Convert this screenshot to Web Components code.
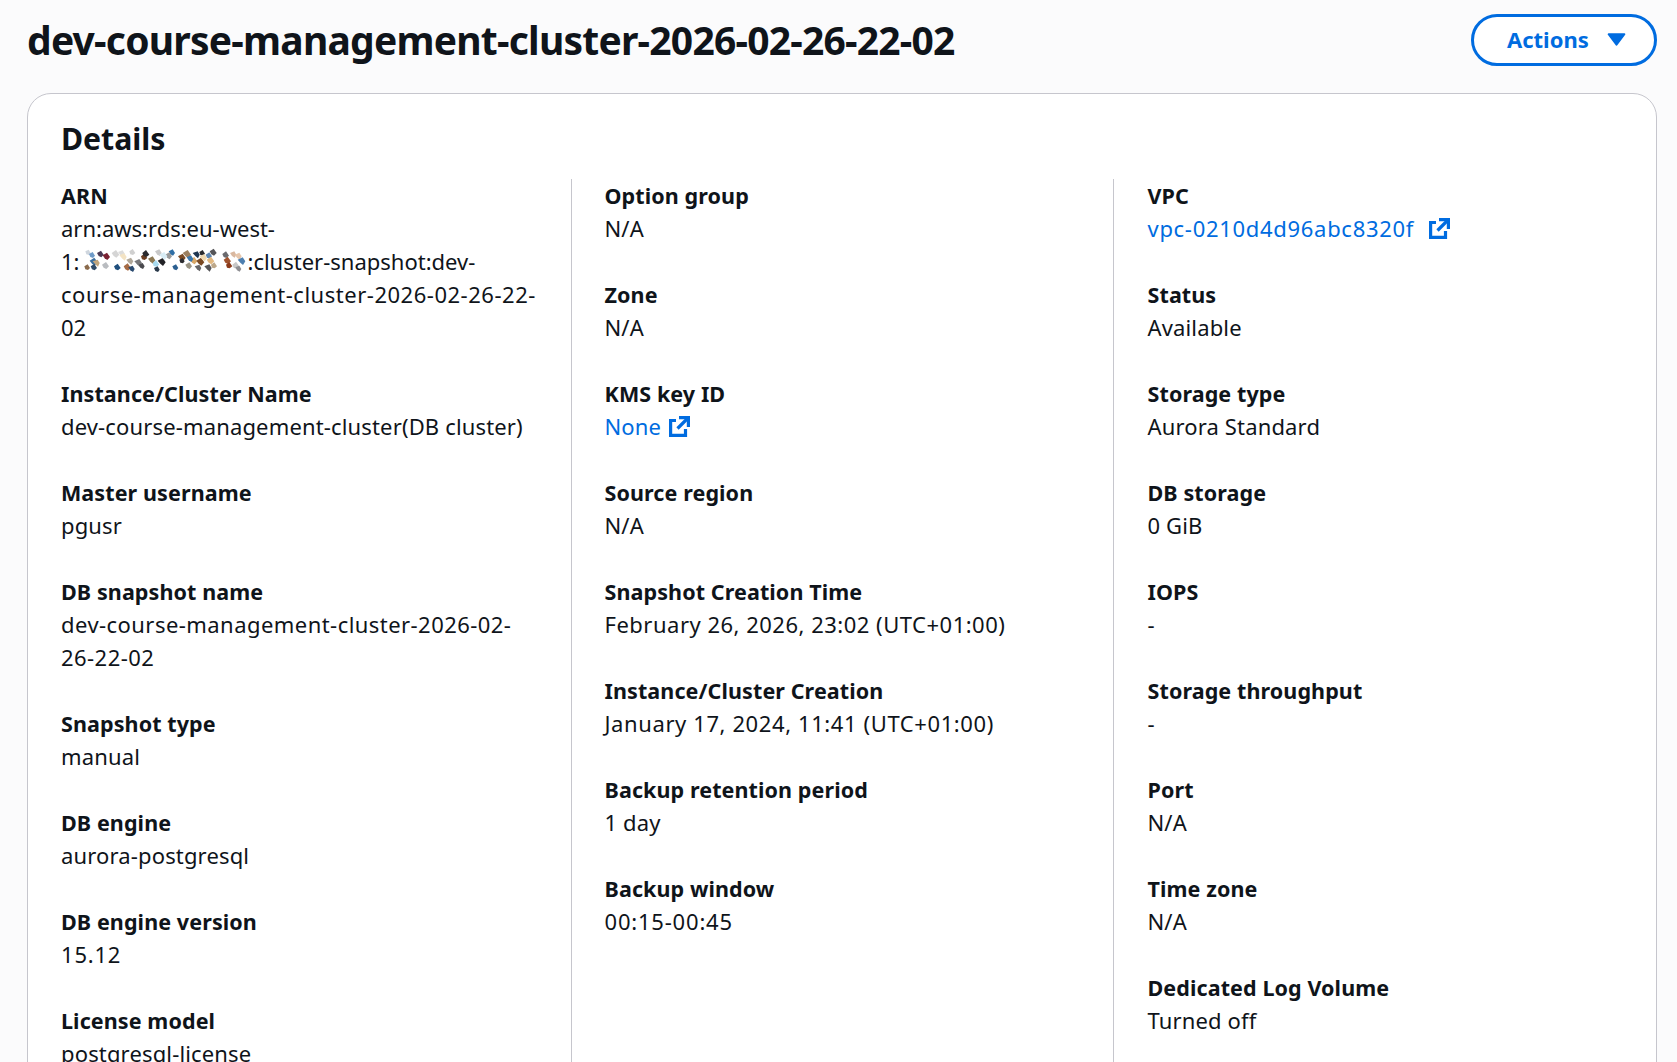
<!DOCTYPE html>
<html>
<head>
<meta charset="utf-8">
<title>dev-course-management-cluster-2026-02-26-22-02</title>
<style>
html, body { margin: 0; height: 100%; overflow: hidden; background: #fbfbfc; }
body { font-family: "Noto Sans", "Open Sans", sans-serif; color: #0f141a; }
</style>
</head>
<body>
<snapshot-page>
    <page-header>dev-course-management-cluster-2026-02-26-22-02</page-header>
    <details-card heading="Details">
        <detail-column>
            <detail-item label="ARN"><arn-value></arn-value></detail-item>
            <detail-item label="Instance/Cluster Name">dev-course-management-cluster(DB cluster)</detail-item>
            <detail-item label="Master username">pgusr</detail-item>
            <detail-item label="DB snapshot name"><span style="letter-spacing:.45px">dev-course-management-cluster-2026-02-26-22-02</span></detail-item>
            <detail-item label="Snapshot type">manual</detail-item>
            <detail-item label="DB engine">aurora-postgresql</detail-item>
            <detail-item label="DB engine version"><span style="letter-spacing:.8px">15.12</span></detail-item>
            <detail-item label="License model">postgresql-license</detail-item>
        </detail-column>
        <detail-column>
            <detail-item label="Option group">N/A</detail-item>
            <detail-item label="Zone">N/A</detail-item>
            <detail-item label="KMS key ID"><external-link style="--link-gap:8px">None</external-link></detail-item>
            <detail-item label="Source region">N/A</detail-item>
            <detail-item label="Snapshot Creation Time"><span style="letter-spacing:.5px">February 26, 2026, 23:02 (UTC+01:00)</span></detail-item>
            <detail-item label="Instance/Cluster Creation"><span style="letter-spacing:.6px">January 17, 2024, 11:41 (UTC+01:00)</span></detail-item>
            <detail-item label="Backup retention period">1 day</detail-item>
            <detail-item label="Backup window"><span style="letter-spacing:.8px">00:15-00:45</span></detail-item>
        </detail-column>
        <detail-column>
            <detail-item label="VPC"><external-link style="--link-gap:15px"><span style="letter-spacing:.7px">vpc-0210d4d96abc8320f</span></external-link></detail-item>
            <detail-item label="Status">Available</detail-item>
            <detail-item label="Storage type">Aurora Standard</detail-item>
            <detail-item label="DB storage">0 GiB</detail-item>
            <detail-item label="IOPS">-</detail-item>
            <detail-item label="Storage throughput">-</detail-item>
            <detail-item label="Port">N/A</detail-item>
            <detail-item label="Time zone">N/A</detail-item>
            <detail-item label="Dedicated Log Volume">Turned off</detail-item>
        </detail-column>
    </details-card>
</snapshot-page>

<script>
class snapshotPage extends HTMLElement {
    constructor () {
        super();
        this.attachShadow({mode: "open"}).innerHTML = `<style>
:host { display: block; padding: 14px 20px 0 27px; }
</style><slot></slot>`;
    }
}

class pageHeader extends HTMLElement {
    constructor () {
        super();
        this.attachShadow({mode: "open"}).innerHTML = `<style>
:host { display: flex; justify-content: space-between; align-items: flex-start; margin-bottom: 27px; }
h1 { margin: 0; font-size: 39px; line-height: 51px; font-weight: 700; letter-spacing: -0.77px; }
button {
    display: flex; align-items: center; gap: 17px;
    box-sizing: border-box; width: 186px; height: 52px; padding: 0 0 2px 33px;
    background: #fff; color: #006ce0; border: 3px solid #006ce0; border-radius: 26px;
    font: 700 22px "Noto Sans", sans-serif;
}
svg { width: 21px; height: 21px; }
</style>
<h1><slot></slot></h1>
<button>Actions<svg viewBox="0 0 16 16"><path fill="#006ce0" stroke="#006ce0" stroke-width="1.5" stroke-linejoin="round" d="M2 4h12l-6 8z"/></svg></button>`;
    }
}

class detailsCard extends HTMLElement {
    constructor () {
        super();
        this.attachShadow({mode: "open"}).innerHTML = `<style>
:host { display: block; box-sizing: border-box; background: #fff; border: 1.5px solid #c6c6cd; border-radius: 24px; padding: 24px 33px 33px; height: 1200px; }
h2 { margin: 0 0 19px; font-size: 30.2px; line-height: 42px; font-weight: 700; }
.cols { display: grid; grid-template-columns: 510px 542px 1fr; }
</style>
<h2></h2>
<div class="cols"><slot></slot></div>`;
        this.shadowRoot.querySelector("h2").textContent = this.getAttribute("heading");
    }
}

class detailColumn extends HTMLElement {
    constructor () {
        super();
        this.attachShadow({mode: "open"}).innerHTML = `<style>
:host { display: flex; flex-direction: column; gap: 33px; box-sizing: border-box; padding: 0 33px 0 33.5px; border-left: 1.5px solid #c6c6cd; min-height: 1000px; }
:host(:first-child) { padding-left: 0; border-left: none; }
:host(:nth-child(2)) { padding-left: 32.5px; }
</style><slot></slot>`;
    }
}

class detailItem extends HTMLElement {
    constructor () {
        super();
        this.attachShadow({mode: "open"}).innerHTML = `<style>
:host { display: block; font-size: 22px; line-height: 33px; letter-spacing: .15px; }
.label { font-weight: 700; font-size: 21.5px; letter-spacing: .1px; }
</style>
<div class="label"></div>
<div><slot></slot></div>`;
        this.shadowRoot.querySelector(".label").textContent = this.getAttribute("label");
    }
}

class externalLink extends HTMLElement {
    constructor () {
        super();
        this.attachShadow({mode: "open"}).innerHTML = `<style>
:host { display: inline-flex; align-items: center; gap: var(--link-gap, 14px); color: #006ce0; }
svg { width: 21px; height: 21px; }
</style>
<slot></slot>
<svg viewBox="0 0 21 21" fill="none" stroke="#006ce0" stroke-width="3.2"><path d="M7 4.5H1.6v14.9h14.9V13"/><path d="M10 1.6h9.4V11"/><path d="M19 2L8.5 12.5"/></svg>`;
    }
}

// redacted account id in the ARN: scattered coloured specks
const specks = [
    [103,40,"#cfd6de"],[115,48,"#6f9bc8"],[140,45,"#4a3a55"],[158,52,"#7a2233"],[120,68,"#3d6f9e"],[130,70,"#c2a67c"],
    [100,85,"#8a6a4c"],[120,85,"#2f4a66"],[155,80,"#b9bcc0"],[185,45,"#d5d5d5"],[205,42,"#dcdcdc"],[210,52,"#f3e3c4"],
    [235,40,"#d0d0d0"],[190,85,"#1f4f7d"],[220,85,"#a56a44"],[235,88,"#2a4a70"],[230,65,"#b0a799"],[255,70,"#77777a"],
    [270,55,"#6b3d20"],[275,45,"#2a2a2e"],[265,80,"#4a4a4e"],[315,40,"#c8c8c8"],[295,62,"#8d7a55"],[325,68,"#222226"],
    [305,75,"#a8dbf0"],[310,90,"#29394a"],[355,40,"#2f6ea5"],[345,50,"#9a9a9a"],[385,55,"#7a4a24"],[400,45,"#9c8060"],
    [385,65,"#2b2b30"],[365,85,"#2b5f90"],[405,80,"#9a9484"],[420,65,"#d8a868"],[440,68,"#7a4a24"],[430,45,"#1e3550"],
    [445,42,"#2a2a2e"],[465,50,"#5c84b0"],[478,40,"#555558"],[470,65,"#e2b880"],[435,85,"#666668"],[465,85,"#555558"],
    [480,80,"#bda88a"],[515,48,"#6a6a6e"],[520,65,"#a0522d"],[540,45,"#d9b8a0"],[555,50,"#e6c6ac"],[565,65,"#4d7fb0"],
    [525,80,"#8b3a1a"],[545,80,"#c8c8c8"],[555,88,"#8e8e92"],[410,58,"#3a77ad"],[450,55,"#f0d8b0"],[330,50,"#d8ecf5"]
];

class arnValue extends HTMLElement {
    constructor () {
        super();
        this.attachShadow({mode: "open"}).innerHTML = `<style>
:host { display: inline; letter-spacing: 0; }
.blur { display: inline-block; width: 168px; height: 33px; vertical-align: top; }
.long { letter-spacing: .52px; }
</style>arn:aws:rds:eu-west-<br>1:<svg class="blur" viewBox="76 18 504 99" preserveAspectRatio="none"></svg>:cluster-snapshot:dev-<br><span class="long">course-management-cluster-2026-02-26-22-</span><br>02`;
        const svg = this.shadowRoot.querySelector("svg");
        let dots = "";
        for (let i = 0; i < specks.length; i++) {
            const [x, y, c] = specks[i];
            const a = 8 + (i * 7) % 6;
            const b = 8 + (i * 11) % 5;
            dots += `<polygon points="${x - a},${y - 3} ${x + 2},${y - b} ${x + b},${y + 2} ${x + 3},${y + a} ${x - 5},${y + 6}" fill="${c}"/>`;
        }
        svg.innerHTML = dots;
    }
}

customElements.define("snapshot-page", snapshotPage);
customElements.define("page-header", pageHeader);
customElements.define("details-card", detailsCard);
customElements.define("detail-column", detailColumn);
customElements.define("detail-item", detailItem);
customElements.define("external-link", externalLink);
customElements.define("arn-value", arnValue);
</script>
</body>
</html>
